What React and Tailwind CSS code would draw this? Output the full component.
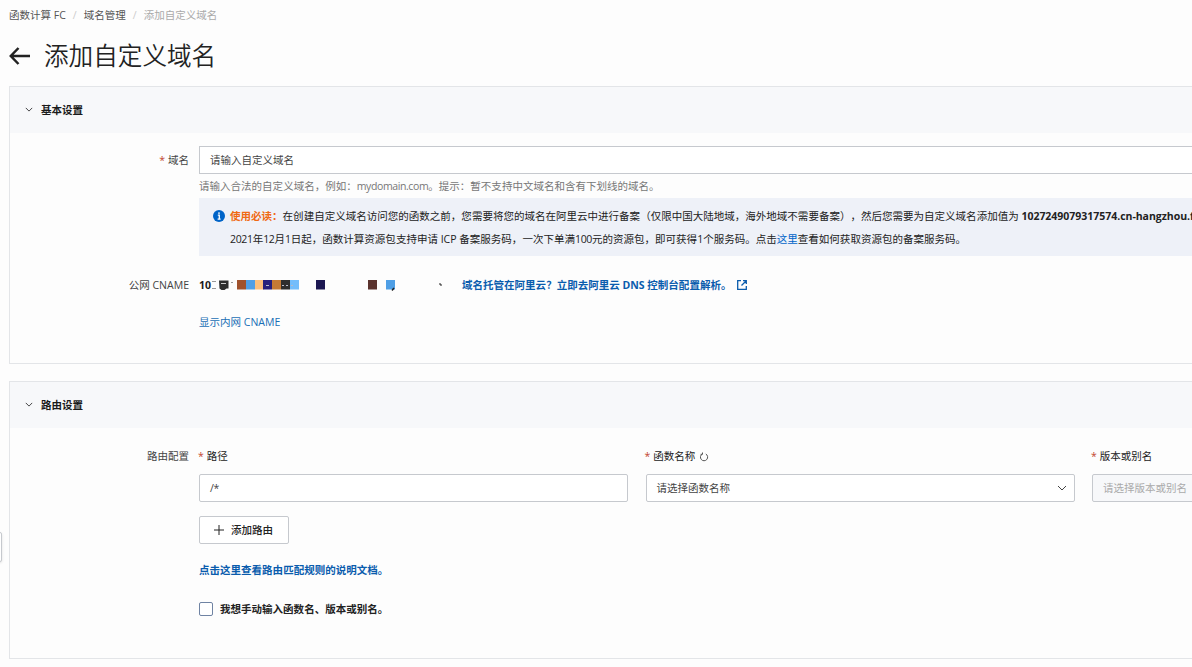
import React from "react";

const BASE_FONT = "font-['Open_Sans','Noto_Sans_CJK_SC',sans-serif]";

const ChevronDown = ({ className }) => (
  <svg viewBox="0 0 10 6" fill="none" stroke="currentColor" className={className}>
    <path d="M1 1l4 4 4-4" />
  </svg>
);

const Required = () => <span className="mr-[3px] -ml-px text-[#c2452d]">*</span>;

// Collapsible card with a grey header
const Panel = ({ title, className, children }) => (
  <section className={`h-[278px] border border-[#e3e5e8] bg-[#fdfdfd] ${className}`}>
    <header className="flex h-[46px] items-center bg-[#f7f8fa] pl-[15px] text-[#1a1a1a]">
      <ChevronDown className="mb-0.5 h-[5px] w-2" />
      <h2 className="ml-2 font-bold">{title}</h2>
    </header>
    {children}
  </section>
);

const FormRow = ({ label, required, className, children }) => (
  <div className={`flex ${className}`}>
    <div className="mr-2.5 flex h-7 w-[179px] shrink-0 items-center justify-end text-[#444]">
      {required && <Required />}
      {label}
    </div>
    <div className="min-w-0 flex-1">{children}</div>
  </div>
);

// Masked CNAME value
const blocks = [
  { x: 38, color: "#a0522d" },
  { x: 47, color: "#4f9fe6" },
  { x: 56, color: "#fbbf7c" },
  { x: 64, color: "#26207c" },
  { x: 73, color: "#c47a35" },
  { x: 82, color: "#2d2d2d" },
  { x: 91, color: "#74bdfb" },
  { x: 117, color: "#1c1852" },
  { x: 169, color: "#5b332e" },
  { x: 187, color: "#4f9fe6" },
];

const MaskedCname = () => (
  <div className="relative w-[263px] shrink-0">
    <span className="font-bold text-[#1a1a1a]">10</span>
    <svg className="absolute inset-0" width="263" height="28" viewBox="0 0 263 28">
      <path d="M13 10.5h4M13 17.5h4M32 11.5h2" stroke="#999" />
      <path d="M20 9.5h9.5v8h-2l-2 1.500h-3l-2-1.500z" fill="#2d2d2d" />
      <path d="M22 12.5h5" stroke="#ccc" />
      {blocks.map((b) => (
        <rect key={b.x} x={b.x} y="9" width="9" height="9.5" fill={b.color} />
      ))}
      <path d="M67 14.5h3M83 14.5h2M87 14.5h2M92 14.5h2" stroke="#b9b9c6" />
      <path d="M195 17l-2 2.500" stroke="#222" strokeWidth="1.5" />
      <path d="M240 13h2v2" stroke="#222" fill="none" />
    </svg>
  </div>
);

const BasicSettings = () => (
  <Panel title="基本设置" className="mt-3.5">
    <FormRow label="域名" required className="mt-[13px]">
      <div className="flex h-7 items-center border border-[#c6c9ce] bg-white px-2.5 text-[#444]">
        请输入自定义域名
      </div>
      <p className="h-6 leading-6 text-[#777]">
        请输入合法的自定义域名，例如：<span className="tracking-[-0.4px]">mydomain.com</span>。提示：暂不支持中文域名和含有下划线的域名。
      </p>
      <div className="flex h-[58px] bg-[#eef1f8] pt-[7px] pl-3.5 leading-[23px] whitespace-nowrap text-[#222]">
        <svg viewBox="0 0 12 12" className="mt-[5px] mr-[5px] size-3 shrink-0">
          <circle cx="6" cy="6" r="6" fill="#0064c8" />
          <path d="M6 2.200v1.700M4.800 5.200h1.500v4M4.600 9.200h3" stroke="#fff" strokeWidth="1.300" fill="none" />
        </svg>
        <div>
          <p>
            <b className="text-[#f06a14]">使用必读：</b>
            在创建自定义域名访问您的函数之前，您需要将您的域名在阿里云中进行备案（仅限中国大陆地域，海外地域不需要备案），然后您需要为自定义域名添加值为{" "}
            <b className="tracking-[-0.03px]">1027249079317574.cn-hangzhou.fc.aliyuncs.com</b>
          </p>
          <p>
            <span className="tracking-[-0.35px]">2021</span>年<span className="tracking-[-0.35px]">12</span>月
            <span className="tracking-[-0.35px]">1</span>日起，函数计算资源包支持申请 ICP 备案服务码，一次下单满
            <span className="tracking-[-0.35px]">100</span>元的资源包，即可获得1个服务码。点击
            <a className="text-[#0064c8]">这里</a>
            查看如何获取资源包的备案服务码。
          </p>
        </div>
      </div>
    </FormRow>
    <FormRow label="公网 CNAME" className="mt-[15px]">
      <div className="flex h-7 leading-7">
        <MaskedCname />
        <a className="flex items-center font-bold text-[#0a5cad]">
          域名托管在阿里云？立即去阿里云 DNS 控制台配置解析。
          <svg viewBox="0 0 10 10" fill="none" stroke="currentColor" strokeWidth="1.300" className="ml-1.5 size-2.5">
            <path d="M4 .7H.7v8.600h8.600V6M6 .7h3.300V4M9.300.7L4.500 5.500" />
          </svg>
        </a>
      </div>
      <a className="mt-[9px] block leading-7 text-[#1a6fb5]">显示内网 CNAME</a>
    </FormRow>
  </Panel>
);

const RouteSettings = () => (
  <Panel title="路由设置" className="mt-[17px]">
    <FormRow label="路由配置" className="mt-3.5">
      <div className="grid grid-cols-[429px_429px_429px] gap-x-[17.5px]">
        <div className="flex h-7 items-center text-[#222]"><Required />路径</div>
        <div className="flex h-7 items-center text-[#222]">
          <Required />函数名称
          <svg viewBox="0 0 10 10" fill="none" stroke="#555" className="mt-0.5 ml-1 size-2.5">
            <path d="M3.300 2A3.600 3.600 0 1 0 6.800 2M3.500 .5V2.300H1.600" />
          </svg>
        </div>
        <div className="flex h-7 items-center text-[#222]"><Required />版本或别名</div>
        <div className="mt-1 flex h-7 items-center rounded-xs border border-[#c6c9ce] bg-white px-2.5 tracking-[-0.4px] text-[#444]">/*</div>
        <div className="mt-1 flex h-7 items-center justify-between rounded-xs border border-[#c6c9ce] bg-white pr-[7px] pl-2.5 text-[#444]">
          请选择函数名称
          <ChevronDown className="h-1.5 w-2.5" />
        </div>
        <div className="mt-1 flex h-7 items-center rounded-xs border border-[#c6c9ce] bg-[#f7f8fa] px-2.5 text-[#aaa]">请选择版本或别名</div>
      </div>
      <button className="mt-3.5 flex h-7 w-[90px] items-center rounded-xs border border-[#c6c9ce] bg-white pl-3.5 font-medium text-[#222]">
        <svg viewBox="0 0 10 10" stroke="currentColor" className="mr-[7px] size-2.5">
          <path d="M5 0v10M0 5h10" />
        </svg>
        添加路由
      </button>
      <a className="mt-3 block h-7 leading-7 font-bold text-[#0a5cad]">点击这里查看路由匹配规则的说明文档。</a>
      <label className="mt-[11px] flex h-7 items-center font-bold text-[#222]">
        <span className="mr-[7px] size-3.5 rounded-xs border border-[#6f83a3] bg-white" />
        我想手动输入函数名、版本或别名。
      </label>
    </FormRow>
  </Panel>
);

export default function App() {
  return (
    <div
      className={`relative h-[667px] w-full overflow-hidden bg-[#fdfdfd] text-[10.52px] leading-4 [text-spacing-trim:space-all] ${BASE_FONT}`}
    >
      <div className="w-[1500px] pt-[7px] pl-[9px]">
        <nav className="flex h-4 items-center text-[#555]">
          <span>函数计算 FC</span>
          <span className="mx-[7px] text-[#ccc]">/</span>
          <span>域名管理</span>
          <span className="mx-[7px] text-[#ccc]">/</span>
          <span className="text-[#aaa]">添加自定义域名</span>
        </nav>
        <div className="mt-[17px] flex h-8 items-center text-[#222]">
          <svg viewBox="0 0 22 18" fill="none" stroke="currentColor" strokeWidth="2.500" className="mr-[13px] h-[18px] w-[22px]">
            <path d="M9.500 1L1.800 9l7.700 8M2 9h19" />
          </svg>
          <h1 className="text-[24.6px] font-[350]">添加自定义域名</h1>
        </div>
        <BasicSettings />
        <RouteSettings />
      </div>
      {/* Side drawer handle */}
      <div className="absolute top-[532px] -left-2 h-[30px] w-2.5 rounded-xs border border-[#c6c9ce] bg-white shadow-sm" />
    </div>
  );
}
